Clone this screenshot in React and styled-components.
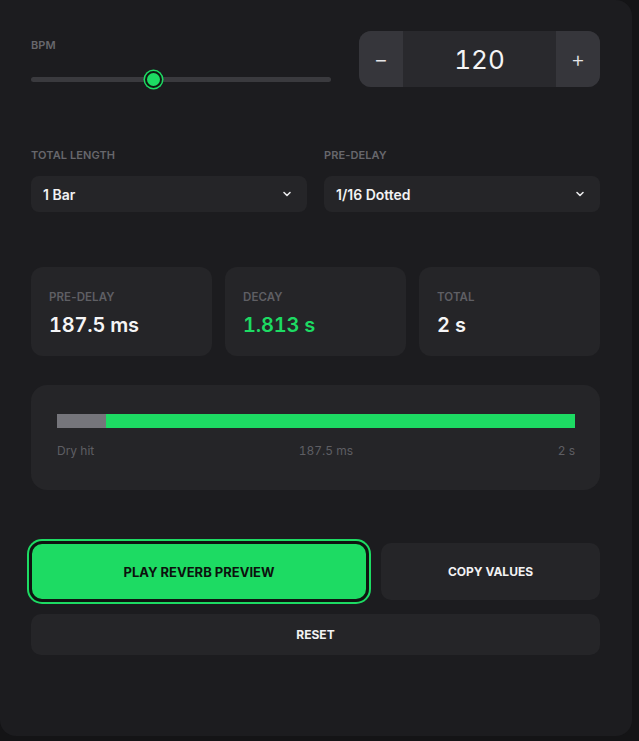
import React, { useState } from "react"
import styled, { createGlobalStyle } from "styled-components"

const GREEN = "#1ddb63"

const GlobalStyle = createGlobalStyle`
  html, body {
    margin: 0;
    padding: 0;
    background: #141416;
    font-family: Inter, "Noto Sans", "Liberation Sans", sans-serif;
    -webkit-font-smoothing: antialiased;
  }
  * { box-sizing: border-box; }
`

const preDelayOptions = ["1/16 Dotted", "1/8", "1/16", "1/32"]
const lengthOptions = ["1 Bar", "2 Bars", "1/2 Bar"]

const BPM_MIN = 40
const BPM_MAX = 240

const Panel = () => {
  const [bpm, setBpm] = useState(120)
  const total = 2000
  const preDelay = 187.5
  const decay = (total - preDelay) / 1000

  return (
    <Card>
      <TopRow>
        <SliderBlock>
          <Label>BPM</Label>
          <Track>
            <Thumb style={{ left: `${((bpm - BPM_MIN) / (BPM_MAX - BPM_MIN)) * 100 + 0.7}%` }} />
          </Track>
        </SliderBlock>
        <Stepper>
          <StepButton onClick={() => setBpm(bpm - 1)}>−</StepButton>
          <StepValue>{bpm}</StepValue>
          <StepButton onClick={() => setBpm(bpm + 1)}>+</StepButton>
        </Stepper>
      </TopRow>

      <SelectRow>
        <Field>
          <Label>Total Length</Label>
          <Select value="1 Bar" options={lengthOptions} />
        </Field>
        <Field>
          <Label>Pre-Delay</Label>
          <Select value="1/16 Dotted" options={preDelayOptions} />
        </Field>
      </SelectRow>

      <Stats>
        <Stat>
          <StatLabel>Pre-Delay</StatLabel>
          <StatValue>{preDelay} ms</StatValue>
        </Stat>
        <Stat>
          <StatLabel>Decay</StatLabel>
          <StatValue accent>{decay.toFixed(3)} s</StatValue>
        </Stat>
        <Stat>
          <StatLabel>Total</StatLabel>
          <StatValue>{total / 1000} s</StatValue>
        </Stat>
      </Stats>

      <Timeline>
        <Bar>
          <Dry style={{ width: `${(preDelay / total) * 100}%` }} />
          <Wet />
        </Bar>
        <Marks>
          <span>Dry hit</span>
          <span>{preDelay} ms</span>
          <span>{total / 1000} s</span>
        </Marks>
      </Timeline>

      <Actions>
        <Button primary>Play Reverb Preview</Button>
        <Button>Copy Values</Button>
        <Button small wide>Reset</Button>
      </Actions>
    </Card>
  )
}

const Select = ({ value }) => (
  <SelectBox>
    <span>{value}</span>
    <svg width="12" height="12" viewBox="0 0 12 12" fill="none">
      <path d="M3 4.5L6 7.5L9 4.5" stroke="#e8e8ea" strokeWidth="1.6" strokeLinecap="round" strokeLinejoin="round" />
    </svg>
  </SelectBox>
)

export default function App() {
  return (
    <>
      <GlobalStyle />
      <Panel />
    </>
  )
}

const Card = styled.div`
  width: 632px;
  height: 736px;
  background: #1c1c1f;
  border-radius: 0 16px 16px 16px;
  padding: 31px 32px 0 31px;
  display: flex;
  flex-direction: column;
`

const Label = styled.div`
  font-size: 11px;
  font-weight: 600;
  letter-spacing: 0.1px;
  text-transform: uppercase;
  color: #67676c;
  line-height: 14px;
`

const StatLabel = styled(Label)`
  font-size: 11.5px;
  color: #5f5f64;
`

const TopRow = styled.div`
  display: flex;
  gap: 28px;
  align-items: flex-start;
`

const SliderBlock = styled.div`
  width: 300px;
  padding-top: 7px;
  display: flex;
  flex-direction: column;
  gap: 25px;
`

const Track = styled.div`
  position: relative;
  height: 5px;
  border-radius: 3px;
  background: #3a3a3e;
`

const Thumb = styled.div`
  position: absolute;
  top: 50%;
  width: 17px;
  height: 17px;
  margin-left: -8.5px;
  margin-top: -8.5px;
  border-radius: 50%;
  background: ${GREEN};
  border: 2px solid #0f1a12;
  box-shadow: 0 0 0 1.5px ${GREEN};
`

const Stepper = styled.div`
  flex: 1;
  height: 56px;
  display: flex;
  border-radius: 12px;
  overflow: hidden;
  background: #29292d;
`

const StepButton = styled.button`
  width: 44px;
  border: none;
  background: #36363b;
  color: #e6e6e8;
  font-family: inherit;
  font-size: 22px;
  font-weight: 300;
  cursor: pointer;
  padding: 0;
`

const StepValue = styled.div`
  flex: 1;
  display: flex;
  align-items: center;
  justify-content: center;
  font-size: 26px;
  font-weight: 400;
  font-variant-numeric: tabular-nums;
  color: #f4f4f5;
`

const SelectRow = styled.div`
  margin-top: 61px;
  display: grid;
  grid-template-columns: 1fr 1fr;
  gap: 17px;
`

const Field = styled.div`
  display: flex;
  flex-direction: column;
  gap: 14px;
`

const SelectBox = styled.div`
  height: 36px;
  border-radius: 8px;
  background: #252528;
  display: flex;
  align-items: center;
  justify-content: space-between;
  padding: 0 14px 0 12px;
  font-size: 14px;
  font-weight: 600;
  color: #f2f2f3;
`

const Stats = styled.div`
  margin-top: 55px;
  display: grid;
  grid-template-columns: repeat(3, 1fr);
  gap: 13px;
`

const Stat = styled.div`
  height: 89px;
  border-radius: 12px;
  background: #252528;
  padding: 23px 18px 0;
  display: flex;
  flex-direction: column;
  gap: 9px;
`

const StatValue = styled.div`
  font-size: 20px;
  font-weight: 600;
  letter-spacing: -0.2px;
  font-variant-numeric: tabular-nums;
  color: ${p => (p.accent ? GREEN : "#f5f5f6")};
`

const Timeline = styled.div`
  margin-top: 29px;
  height: 105px;
  border-radius: 16px;
  background: #252528;
  padding: 29px 25px 0 26px;
`

const Bar = styled.div`
  display: flex;
  height: 14px;
`

const Dry = styled.div`
  background: #75757b;
`

const Wet = styled.div`
  flex: 1;
  background: ${GREEN};
`

const Marks = styled.div`
  margin-top: 15px;
  display: flex;
  justify-content: space-between;
  font-size: 12px;
  font-variant-numeric: tabular-nums;
  color: #5e5e63;
`

const Actions = styled.div`
  margin-top: 51px;
  display: grid;
  grid-template-columns: 338px 1fr;
  align-items: center;
  column-gap: 12px;
  row-gap: 12px;
`

const Button = styled.button`
  grid-column: ${p => (p.wide ? "1 / -1" : "auto")};
  height: ${p => (p.small ? "41px" : p.primary ? "61px" : "57px")};
  margin-left: ${p => (p.primary ? "-2px" : "0")};
  border-radius: ${p => (p.primary ? "13px" : "10px")};
  border: ${p => (p.primary ? "3px solid #0f1411" : "none")};
  box-shadow: ${p => (p.primary ? `0 0 0 2px ${GREEN}` : "none")};
  background: ${p => (p.primary ? GREEN : "#252528")};
  color: ${p => (p.primary ? "#0c110d" : "#f2f2f3")};
  font-family: inherit;
  font-size: ${p => (p.primary ? "13px" : "12px")};
  font-weight: 700;
  text-transform: uppercase;
  letter-spacing: 0;
  cursor: pointer;
`
